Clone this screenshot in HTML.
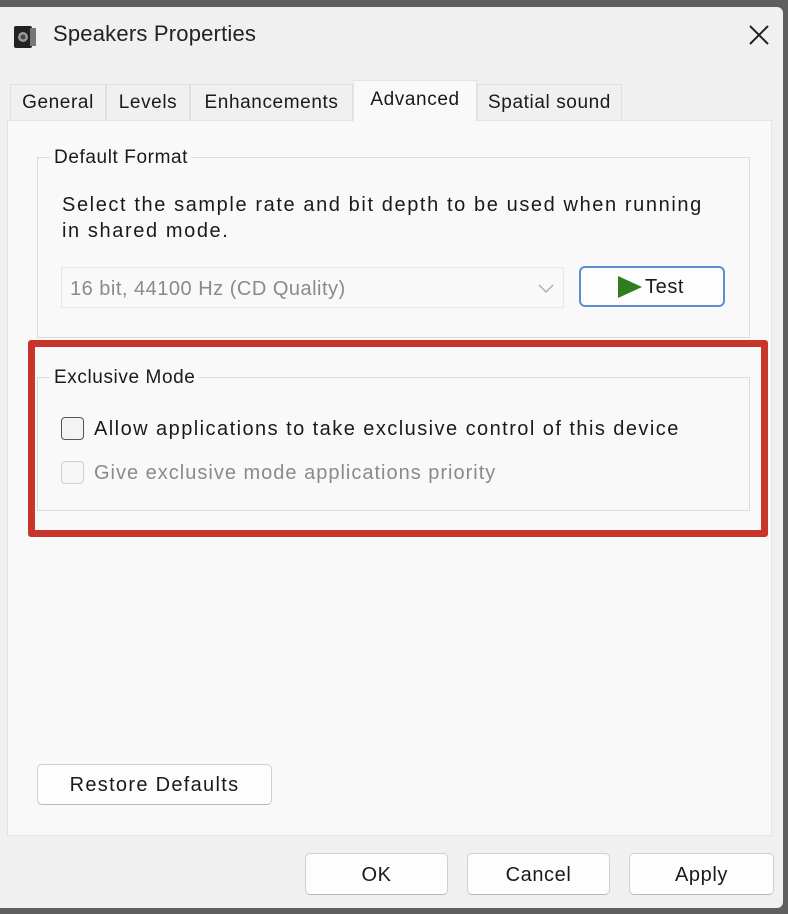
<!DOCTYPE html>
<html><head><style>
*{box-sizing:border-box;margin:0;padding:0}
body{width:788px;height:914px;background:#5f5f5f;font-family:"Liberation Sans",sans-serif;color:#1a1a1a;position:relative;overflow:hidden}
.dlg{position:absolute;left:0;top:7px;width:783px;height:901px;background:#f0f0f0;border-radius:0 6px 6px 0}
.abs{position:absolute}
.t{font-size:20px;white-space:nowrap;letter-spacing:1.4px}
.tab{position:absolute;top:84px;height:37px;background:#f0f0f0;border:1px solid #e0e0e0;border-bottom:none;font-size:19px;text-align:center;line-height:36px;letter-spacing:0.6px;white-space:nowrap}
.panel{position:absolute;left:7px;top:120px;width:765px;height:716px;background:#f9f9f9;border:1px solid #e3e3e3}
.grp{position:absolute;border:1px solid #dcdcdc}
.lg{position:absolute;background:#f9f9f9;padding:0 4px;font-size:19px;letter-spacing:0.6px}
.btn{position:absolute;background:#fdfdfd;border:1px solid #d0d0d0;border-bottom-color:#b8b8b8;border-radius:5px;font-size:20px;text-align:center;letter-spacing:0.6px}
.cb{position:absolute;width:23px;height:23px;border:1.5px solid #555;border-radius:4px;background:#f3f3f3}
</style></head><body>
<div class="dlg">
 <svg class="abs" style="left:13px;top:17px" width="26" height="26" viewBox="0 0 26 26"><rect x="1" y="2" width="18" height="22" rx="2" fill="#222"/><rect x="17" y="4" width="6" height="18" fill="#777"/><circle cx="10" cy="13" r="5" fill="#999"/><circle cx="10" cy="13" r="2.5" fill="#444"/></svg>
 <div class="abs t" style="left:53px;top:14px;font-size:22px;color:#222;letter-spacing:0.2px">Speakers Properties</div>
 <svg class="abs" style="left:748px;top:17px" width="22" height="22"><path d="M2 2L20 20M20 2L2 20" stroke="#222" stroke-width="2"/></svg>
</div>
<div class="tab" style="left:10px;width:96px">General</div>
<div class="tab" style="left:106px;width:84px">Levels</div>
<div class="tab" style="left:190px;width:163px">Enhancements</div>
<div class="tab" style="left:477px;width:145px">Spatial sound</div>
<div class="panel"></div>
<div class="tab" style="left:353px;top:80px;width:124px;height:42px;background:#f9f9f9;line-height:38px;z-index:2;border-color:#e3e3e3">Advanced</div>

<div class="grp" style="left:37px;top:157px;width:713px;height:181px"></div>
<div class="lg" style="left:50px;top:147px">Default Format</div>
<div class="abs t" style="left:62px;top:192px;line-height:26px;letter-spacing:1.6px">Select the sample rate and bit depth to be used when running<br>in shared mode.</div>
<div class="abs" style="left:61px;top:267px;width:503px;height:41px;border:1px solid #e6e6e6;background:#f9f9f9"></div>
<div class="abs t" style="left:70px;top:278px;color:#8a8a8a;letter-spacing:0.5px">16 bit, 44100 Hz (CD Quality)</div>
<svg class="abs" style="left:537px;top:282px" width="18" height="12"><path d="M2 3L9 10L16 3" stroke="#aaa" fill="none" stroke-width="1.3"/></svg>
<div class="btn" style="left:579px;top:266px;width:146px;height:41px;border:2px solid #5b8fd1;border-radius:6px"></div>
<svg class="abs" style="left:617px;top:275px" width="26" height="24"><path d="M1 1L25 12L1 23Z" fill="#2f7d1f"/></svg>
<div class="abs t" style="left:645px;top:276px;font-size:20px;letter-spacing:0.6px">Test</div>

<div class="grp" style="left:37px;top:377px;width:713px;height:134px"></div>
<div class="lg" style="left:50px;top:367px">Exclusive Mode</div>
<div class="cb" style="left:61px;top:417px"></div>
<div class="abs t" style="left:94px;top:418px;font-size:20px;letter-spacing:1.45px">Allow applications to take exclusive control of this device</div>
<div class="cb" style="left:61px;top:461px;border-color:#cfcfcf;background:#f6f6f6"></div>
<div class="abs t" style="left:94px;top:462px;font-size:20px;color:#8a8a8a;letter-spacing:1.0px">Give exclusive mode applications priority</div>
<div class="abs" style="left:28px;top:340px;width:740px;height:197px;border:7px solid #c8352a;border-radius:3px"></div>

<div class="btn" style="left:37px;top:764px;width:235px;height:41px;line-height:40px;letter-spacing:1.3px">Restore Defaults</div>
<div class="btn" style="left:305px;top:853px;width:143px;height:42px;line-height:42px">OK</div>
<div class="btn" style="left:467px;top:853px;width:143px;height:42px;line-height:42px">Cancel</div>
<div class="btn" style="left:629px;top:853px;width:145px;height:42px;line-height:42px">Apply</div>
</body></html>
